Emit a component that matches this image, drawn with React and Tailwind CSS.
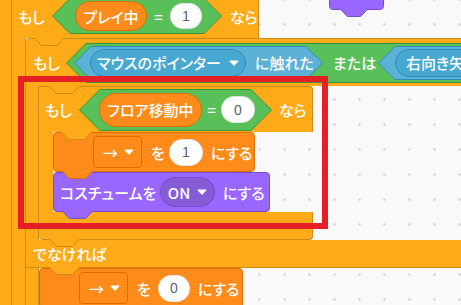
import React from 'react'

const jp = "font-['Noto_Sans_CJK_JP',sans-serif] font-medium text-[15px] leading-none text-white whitespace-nowrap [font-feature-settings:'palt']"
const num = "font-['Liberation_Sans',sans-serif] text-[14px] leading-none text-[#575e75]"

function Caret() {
  return (
    <svg width="10" height="6" viewBox="0 0 10 6" className="shrink-0" aria-hidden="true">
      <path d="M1.2 1h7.6L5 5z" fill="#fff" stroke="#fff" strokeWidth="1.2" strokeLinejoin="round" />
    </svg>
  )
}

// boolean slot: hexagon with 45deg points
function Hex({ w, h, fill, stroke, className = '', children }) {
  const d = h / 2
  return (
    <div className={`relative flex shrink-0 items-center ${className}`}>
      <svg className="absolute inset-0" width={w} height={h} aria-hidden="true">
        <path d={`M${d} 0.5H${w - d}L${w - 0.5} ${d}L${w - d} ${h - 0.5}H${d}L0.5 ${d}Z`} fill={fill} stroke={stroke} />
      </svg>
      <div className="relative flex h-full items-center">{children}</div>
    </div>
  )
}

// bottom tab of a stack block, sits over the next block
function Tab({ className = '', fill, stroke, w = 31 }) {
  const d = 7
  return (
    <svg className={`absolute top-full z-10 ${className}`} width={w} height={d + 1} aria-hidden="true">
      <path d={`M0 0L${d} ${d}H${w - d}L${w} 0Z`} fill={fill} />
      <path d={`M0.5 0L${d + 0.3} ${d + 0.5}H${w - d - 0.3}L${w - 0.5} 0`} fill="none" stroke={stroke} />
    </svg>
  )
}

function Oval({ className = '', children }) {
  return (
    <div className={`flex shrink-0 items-center justify-center rounded-full border border-black/10 bg-white ${num} ${className}`}>
      {children}
    </div>
  )
}

function Reporter({ className = '', children }) {
  return (
    <div className={`flex shrink-0 items-center justify-center rounded-full border border-[#db6e00] bg-[#ff8c1a] ${className}`}>
      <span className={jp}>{children}</span>
    </div>
  )
}

function VarMenu() {
  return (
    <div className="flex h-[32px] w-[49px] shrink-0 items-center justify-center gap-[6px] rounded-[4px] border border-[#db6e00] bg-[#ff8c1a] pl-[2px]">
      <span className={jp}>→</span>
      <Caret />
    </div>
  )
}

function SetBlock({ value, className = '', valueClass = '' }) {
  return (
    <div className={`relative flex h-[40px] shrink-0 items-center rounded-[4px] border border-[#db6e00] bg-[#ff8c1a] pl-[39px] ${className}`}>
      <VarMenu />
      <span className={`${jp} ml-[9px]`}>を</span>
      <Oval className={`h-[27px] ${valueClass}`}>{value}</Oval>
      <span className={`${jp} ml-[8px]`}>にする</span>
      <Tab className="left-[8px]" fill="#ff8c1a" stroke="#db6e00" />
    </div>
  )
}

export default function App() {
  return (
    <div className="relative h-[305px] w-[461px] overflow-hidden bg-[#f9f9f9] bg-[radial-gradient(circle,#dadada_1px,transparent_1.6px)] bg-[size:25px_25px] bg-[position:-3px_12px]">
      {/* another script, bottom of a looks block */}
      <div className="absolute left-[329px] top-[-30px] h-[40px] w-[55px] rounded-b-[4px] border border-[#774dcb] bg-[#9966ff]">
        <Tab className="left-[10px]" w={28} fill="#9966ff" stroke="#774dcb" />
      </div>

      <div className="absolute left-0 top-[-6px] flex">
        {/* arm of an outer C block */}
        <div className="w-[12px] shrink-0 border-r border-[#cf8b17] bg-[#ffab19]" />

        {/* もし プレイ中 = 1 なら */}
        <div className="flex flex-col">
          <div className="relative flex h-[44px] w-[247px] items-center rounded-tr-[4px] border-r border-[#cf8b17] bg-[#ffab19] pl-[6px]">
            <span className={`${jp} w-[27px]`}>もし</span>
            <Hex w={170} h={36} fill="#59c059" stroke="#389438" className="ml-[7px] h-[36px] w-[170px] pl-[23px]">
              <Reporter className="h-[30px] w-[72px]">プレイ中</Reporter>
              <span className={`${jp} w-[23px] text-center`}>=</span>
              <Oval className="h-[26px] w-[32px]">1</Oval>
            </Hex>
            <span className={`${jp} ml-[8px]`}>なら</span>
            <Tab className="left-[22px]" fill="#ffab19" stroke="#cf8b17" />
          </div>

          <div className="flex">
            <div className="w-[14px] shrink-0 border-r border-[#cf8b17] bg-[#ffab19]" />

            {/* もし <マウスのポインター に触れた または ...> なら */}
            <div className="flex w-[600px] flex-col">
              <div className="relative flex h-[48px] items-center rounded-tl-[4px] border-t border-[#cf8b17] bg-[#ffab19] pl-[7px]">
                <span className={`${jp} w-[26px]`}>もし</span>
                <Hex w={520} h={40} fill="#59c059" stroke="#389438" className="ml-[7px] h-[40px] w-[520px] pl-[8px]">
                  <Hex w={249} h={34} fill="#5cb1d6" stroke="#2e8eb8" className="h-[34px] w-[249px] pl-[16px]">
                    <div className="flex h-[28px] w-[156px] items-center justify-center gap-[8px] rounded-full border border-[#2e8eb8] bg-[#47a8d1]">
                      <span className={jp}>マウスのポインター</span>
                      <Caret />
                    </div>
                    <span className={`${jp} ml-[9px]`}>に触れた</span>
                  </Hex>
                  <span className={`${jp} ml-[10px] w-[39px]`}>または</span>
                  <Hex w={200} h={34} fill="#5cb1d6" stroke="#2e8eb8" className="ml-[6px] h-[34px] w-[200px] pl-[17px]">
                    <div className="flex h-[28px] w-[150px] items-center rounded-full border border-[#2e8eb8] bg-[#47a8d1] pl-[10px]">
                      <span className={jp}>右向き矢印キー</span>
                    </div>
                  </Hex>
                </Hex>
                <Tab className="left-[23px]" fill="#ffab19" stroke="#cf8b17" />
              </div>

              <div className="flex">
                <div className="w-[13px] shrink-0 border-r border-[#cf8b17] bg-[#ffab19]" />

                {/* もし フロア移動中 = 0 なら */}
                <div className="flex flex-col">
                  <div className="relative flex h-[46px] w-[274px] items-center rounded-tr-[4px] border-r border-t border-[#cf8b17] bg-[#ffab19] pl-[6px]">
                    <span className={`${jp} w-[27px]`}>もし</span>
                    <Hex w={193} h={42} fill="#59c059" stroke="#389438" className="ml-[7px] h-[42px] w-[193px] pl-[20px]">
                      <Reporter className="h-[34px] w-[103px]">フロア移動中</Reporter>
                      <span className={`${jp} w-[19px] text-center`}>=</span>
                      <Oval className="h-[27px] w-[34px]">0</Oval>
                    </Hex>
                    <span className={`${jp} ml-[7px]`}>なら</span>
                    <Tab className="left-[22px]" fill="#ffab19" stroke="#cf8b17" />
                  </div>

                  <div className="flex">
                    <div className="w-[14px] shrink-0 bg-[#ffab19]" />
                    <div className="flex flex-col">
                      <SetBlock value="1" className="w-[202px]" valueClass="ml-[4px] w-[34px]" />
                      <div className="relative flex h-[40px] w-[217px] items-center rounded-[4px] border border-[#774dcb] bg-[#9966ff] pl-[6px]">
                        <span className={`${jp} w-[92px]`}>コスチュームを</span>
                        <div className="ml-[8px] flex h-[30px] w-[55px] items-center justify-center gap-[7px] rounded-full border border-[#774dcb] bg-[#855cd6]">
                          <span className={`${jp} font-['Liberation_Sans',sans-serif]`}>ON</span>
                          <Caret />
                        </div>
                        <span className={`${jp} ml-[8px]`}>にする</span>
                        <Tab className="left-[8px]" fill="#9966ff" stroke="#774dcb" />
                      </div>
                    </div>
                  </div>

                  <div className="relative h-[28px] w-[274px] rounded-b-[4px] border-b border-r border-[#cf8b17] bg-[#ffab19]">
                    <Tab className="left-[10px]" fill="#ffab19" stroke="#cf8b17" />
                  </div>
                </div>
              </div>

              {/* でなければ */}
              <div className="relative flex h-[28px] items-center border-b border-[#cf8b17] bg-[#ffab19] pl-[7px]">
                <span className={jp}>でなければ</span>
                <Tab className="left-[23px]" fill="#ffab19" stroke="#cf8b17" />
              </div>

              <div className="flex">
                <div className="w-[13px] shrink-0 border-r border-[#cf8b17] bg-[#ffab19]" />
                <SetBlock value="0" className="w-[204px]" valueClass="ml-[7px] w-[32px]" />
              </div>
            </div>
          </div>
        </div>
      </div>

      {/* red highlight frame */}
      <div className="absolute left-[18px] top-[76px] z-20 h-[153px] w-[310px] border-[6px] border-[#e61e25]" />
    </div>
  )
}
